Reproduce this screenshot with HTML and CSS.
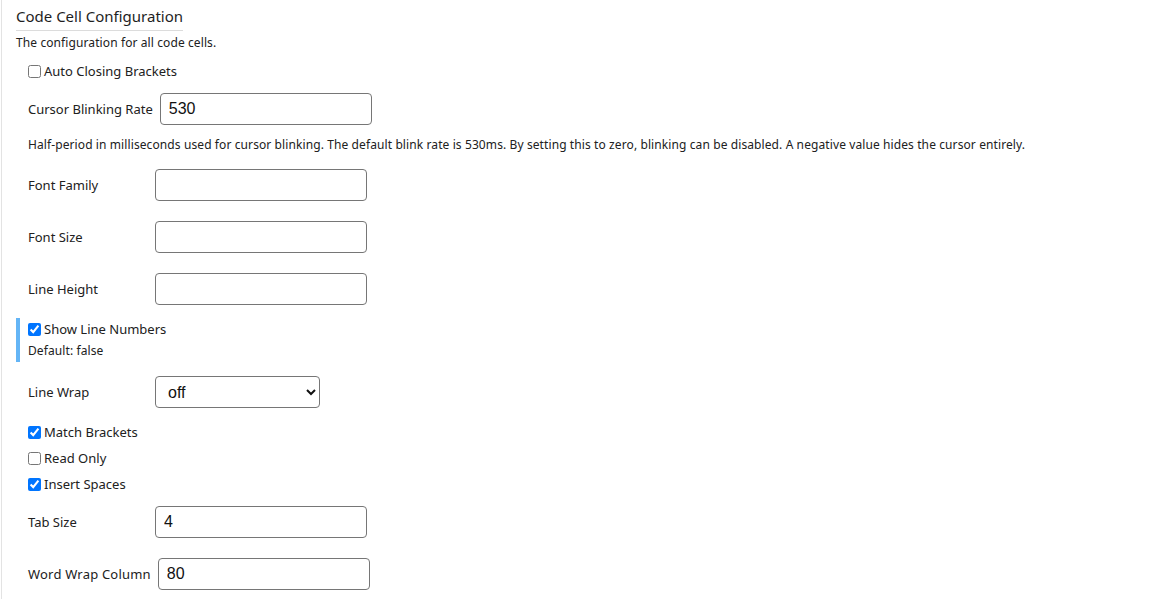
FILE: index.html
```html
<!DOCTYPE html>
<html>
<head>
<meta charset="utf-8">
<link rel="stylesheet" href="styles.css">
</head>
<body>
<div class="page">
  <div class="section">
    <div class="title">Code Cell Configuration</div>
    <div class="desc">The configuration for all code cells.</div>

    <label class="check row-auto"><input type="checkbox">Auto Closing Brackets</label>

    <div class="field row-cursor"><span class="lbl">Cursor Blinking Rate</span><input class="txt" type="text" value="530"></div>
    <div class="help">Half-period in milliseconds used for cursor blinking. The default blink rate is 530ms. By setting this to zero, blinking can be disabled. A negative value hides the cursor entirely.</div>

    <div class="field row-ff"><span class="lbl">Font Family</span><input class="txt" type="text"></div>
    <div class="field row-next"><span class="lbl">Font Size</span><input class="txt" type="text"></div>
    <div class="field row-next"><span class="lbl">Line Height</span><input class="txt" type="text"></div>

    <div class="modified">
      <label class="check"><input type="checkbox" checked>Show Line Numbers</label>
      <div class="default">Default: false</div>
    </div>

    <div class="field row-wrap"><span class="lbl">Line Wrap</span>
      <select class="sel"><option>off</option><option>on</option><option>wordWrapColumn</option><option>bounded</option></select>
    </div>

    <div class="checks">
      <label class="check"><input type="checkbox" checked>Match Brackets</label>
      <label class="check"><input type="checkbox">Read Only</label>
      <label class="check"><input type="checkbox" checked>Insert Spaces</label>
    </div>

    <div class="field row-tab"><span class="lbl">Tab Size</span><input class="txt" type="text" value="4"></div>
    <div class="field row-next"><span class="lbl lbl-wide">Word Wrap Column</span><input class="txt" type="text" value="80"></div>
  </div>
</div>
</body>
</html>
```
FILE: styles.css
```css
html, body {
  margin: 0;
  padding: 0;
  background: #fff;
}
body {
  font-family: "Noto Sans", "Open Sans", sans-serif;
  font-size: 12px;
  letter-spacing: 0.1px;
  color: #212121;
}
.page {
  margin-left: 1px;
  border-left: 1px solid #e3e3e3;
  min-height: 599px;
  box-sizing: border-box;
}
.section {
  padding-left: 14px;
  display: flex;
  flex-direction: column;
  align-items: flex-start;
}
.title {
  margin-top: 4px;
  font-size: 15px;
  letter-spacing: 0;
  line-height: 24px;
  padding-bottom: 2px;
  border-bottom: 1px solid #dcdcdc;
  color: #1e1e1e;
}
.desc {
  margin-top: 3px;
  line-height: 18px;
}
.check {
  display: flex;
  align-items: center;
  height: 18px;
  line-height: 18px;
  padding-left: 12px;
  font-size: 13px;
  letter-spacing: 0;
  color: #212121;
}
.check input {
  margin: 0 3px 0 0;
  width: 13px;
  height: 13px;
}
.row-auto { margin-top: 10px; }
.field {
  display: flex;
  align-items: center;
  padding-left: 12px;
  font-size: 13px;
  letter-spacing: 0;
}
.lbl {
  min-width: 120px;
  margin-right: 7px;
  white-space: nowrap;
}
.lbl-wide {
  letter-spacing: 0.2px;
}
.txt, .sel {
  box-sizing: border-box;
  height: 32px;
  border: 1px solid #767676;
  border-radius: 4px;
  font-family: "Liberation Sans", Arial, sans-serif;
  font-size: 16px;
  letter-spacing: 0;
  color: #111;
  background: #fff;
}
.txt {
  width: 212px;
  padding: 0 8px;
}
.sel {
  width: 165px;
  padding: 0 8px;
}
.row-cursor { margin-top: 13px; }
.help {
  margin-top: 11px;
  padding-left: 12px;
  line-height: 18px;
}
.row-ff { margin-top: 15px; }
.row-next { margin-top: 20px; }
.modified {
  margin-top: 13px;
  border-left: 4px solid #64b5f6;
  padding: 2px 0 2px 0;
  display: flex;
  flex-direction: column;
  gap: 4px;
}
.modified .check { padding-left: 8px; }
.default {
  padding-left: 8px;
  line-height: 18px;
}
.row-wrap { margin-top: 14px; }
.checks {
  margin-top: 15px;
  display: flex;
  flex-direction: column;
  gap: 8px;
}
.row-tab { margin-top: 13px; }
```
